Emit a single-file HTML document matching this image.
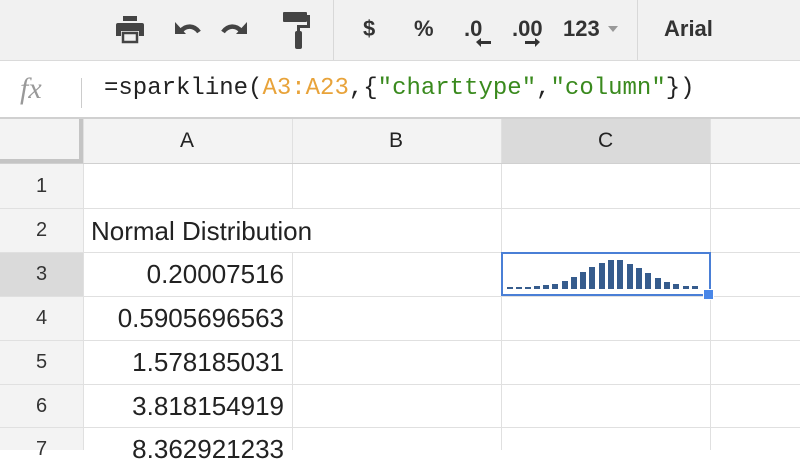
<!DOCTYPE html>
<html><head><style>
body{margin:0;width:800px;height:450px;overflow:hidden;background:#fff;font-family:"Liberation Sans",Arial,sans-serif;position:relative}
.a{position:absolute}
.tb{left:0;top:0;width:800px;height:60px;background:#f1f1f1;border-bottom:1px solid #dadada}
.fb{left:0;top:61px;width:800px;height:56px;background:#fff;border-bottom:2px solid #d0d0d0}
.hl{background:#dadada}
.vl{width:1px;background:#e0e0e0}
.hlin{height:1px;background:#e0e0e0}
.t{font-size:26px;color:#222;white-space:nowrap}
.rn{width:83px;text-align:center;font-size:20px;color:#333}
.bar{position:absolute;bottom:0;width:6px;background:#365c8d}
.icn{font-weight:bold;color:#333;font-size:22px}
</style></head><body>
<div class="a tb"></div>
<svg class="a" style="left:115px;top:14px" width="140" height="34" viewBox="0 0 140 34">
<g fill="#444">
<rect x="8" y="2" width="14" height="5"/>
<path d="M3 9h24a2 2 0 0 1 2 2v11h-5v-5H6v5H1V11a2 2 0 0 1 2-2z"/>
<rect x="8" y="19" width="14" height="9" fill="none" stroke="#444" stroke-width="2.5"/>
</g>
<g fill="none" stroke="#444" stroke-width="4.5"><path d="M66 17c5-6 13-6 18 1"/><path d="M126 17c-5-6-13-6-18 1"/></g>
<g fill="#444"><path d="M60 8v12h11z"/><path d="M132 8v12h-11z"/></g>
</svg>
<svg class="a" style="left:280px;top:10px" width="34" height="40" viewBox="0 0 34 40">
<g fill="#444"><rect x="3" y="2" width="24" height="10" rx="1"/><rect x="27" y="5" width="3" height="12"/><rect x="17" y="15" width="13" height="3"/><rect x="17" y="15" width="3" height="8"/><rect x="15" y="21" width="7" height="18" rx="2"/></g></svg>
<div class="a" style="left:333px;top:0;width:1px;height:60px;background:#d8d8d8"></div>
<div class="a" style="left:637px;top:0;width:1px;height:60px;background:#d8d8d8"></div>
<div class="a icn" style="left:363px;top:16px">$</div>
<div class="a icn" style="left:414px;top:16px">%</div>
<div class="a icn" style="left:464px;top:16px">.0</div>
<div class="a icn" style="left:512px;top:16px">.00</div>
<svg class="a" style="left:476px;top:36px" width="80" height="14"><g fill="#333"><path d="M0 6l5-4v3h10v3H5v3z"/><path d="M64 6l-5-4v3H49v3h10v3z"/></g></svg>
<div class="a icn" style="left:563px;top:16px">123</div>
<div class="a" style="left:608px;top:26px;border:5px solid transparent;border-top:6px solid #999"></div>
<div class="a icn" style="left:664px;top:16px">Arial</div>
<div class="a fb"></div>
<div class="a" style="left:20px;top:72px;font-family:'Liberation Serif',serif;font-style:italic;font-size:30px;color:#999">fx</div>
<div class="a" style="left:81px;top:78px;width:1px;height:30px;background:#ccc"></div>
<div class="a" style="left:104px;top:75px;font-family:'Liberation Mono',monospace;font-size:24px;color:#222;white-space:nowrap">=sparkline(<span style="color:#e8a33a">A3:A23</span>,{<span style="color:#3a8a1e">"charttype"</span>,<span style="color:#3a8a1e">"column"</span>})</div>
<div class="a" style="left:0;top:119px;width:800px;height:44px;background:#f3f3f3"></div>
<div class="a hl" style="left:501px;top:119px;width:209px;height:44px"></div>
<div class="a" style="left:0;top:119px;width:83px;height:331px;background:#f3f3f3"></div>
<div class="a hl" style="left:0;top:253px;width:83px;height:43px"></div>
<div class="a" style="left:0;top:119px;width:79px;height:40px;border-right:4px solid #c4c4c4;border-bottom:4px solid #c4c4c4"></div>
<div class="a" style="left:180px;top:129px;font-size:21px;color:#222">A</div>
<div class="a" style="left:389px;top:129px;font-size:21px;color:#222">B</div>
<div class="a" style="left:598px;top:129px;font-size:21px;color:#222">C</div>
<div class="a vl" style="left:83px;top:119px;height:331px"></div>
<div class="a vl" style="left:292px;top:119px;height:331px"></div>
<div class="a vl" style="left:501px;top:119px;height:331px"></div>
<div class="a vl" style="left:710px;top:119px;height:331px"></div>
<div class="a hlin" style="left:0;top:163px;width:800px;background:#d0d0d0"></div>
<div class="a hlin" style="left:0;top:208px;width:800px"></div>
<div class="a hlin" style="left:0;top:252px;width:800px"></div>
<div class="a hlin" style="left:0;top:296px;width:800px"></div>
<div class="a hlin" style="left:0;top:340px;width:800px"></div>
<div class="a hlin" style="left:0;top:384px;width:800px"></div>
<div class="a hlin" style="left:0;top:427px;width:800px"></div>
<div class="a" style="left:84px;top:209px;width:290px;height:43px;background:#fff"></div>
<div class="a rn" style="left:0;top:175px">1</div>
<div class="a rn" style="left:0;top:219px">2</div>
<div class="a rn" style="left:0;top:263px">3</div>
<div class="a rn" style="left:0;top:307px">4</div>
<div class="a rn" style="left:0;top:351px">5</div>
<div class="a rn" style="left:0;top:395px">6</div>
<div class="a rn" style="left:0;top:438px">7</div>
<div class="a t" style="left:91px;top:216px">Normal Distribution</div>
<div class="a t" style="right:516px;top:259px">0.20007516</div>
<div class="a t" style="right:516px;top:303px">0.5905696563</div>
<div class="a t" style="right:516px;top:347px">1.578185031</div>
<div class="a t" style="right:516px;top:391px">3.818154919</div>
<div class="a t" style="right:516px;top:434px">8.362921233</div>
<div class="a" style="left:501px;top:252px;width:206px;height:40px;border:2px solid #4a7fd6"></div>
<div class="a" style="left:703px;top:289px;width:9px;height:9px;background:#4a87e8;border:1px solid #fff"></div>
<div class="a" style="left:506px;top:259px;width:196px;height:30px">
<div class="bar" style="left:1px;height:2px"></div><div class="bar" style="left:10px;height:2px"></div><div class="bar" style="left:19px;height:2px"></div><div class="bar" style="left:28px;height:3px"></div><div class="bar" style="left:37px;height:4px"></div><div class="bar" style="left:46px;height:5px"></div><div class="bar" style="left:56px;height:8px"></div><div class="bar" style="left:65px;height:12px"></div><div class="bar" style="left:74px;height:17px"></div><div class="bar" style="left:83px;height:22px"></div><div class="bar" style="left:93px;height:26px"></div><div class="bar" style="left:102px;height:29px"></div><div class="bar" style="left:111px;height:29px"></div><div class="bar" style="left:121px;height:25px"></div><div class="bar" style="left:130px;height:21px"></div><div class="bar" style="left:139px;height:16px"></div><div class="bar" style="left:149px;height:11px"></div><div class="bar" style="left:158px;height:7px"></div><div class="bar" style="left:167px;height:5px"></div><div class="bar" style="left:177px;height:3px"></div><div class="bar" style="left:186px;height:3px"></div>
</div>
</body></html>
